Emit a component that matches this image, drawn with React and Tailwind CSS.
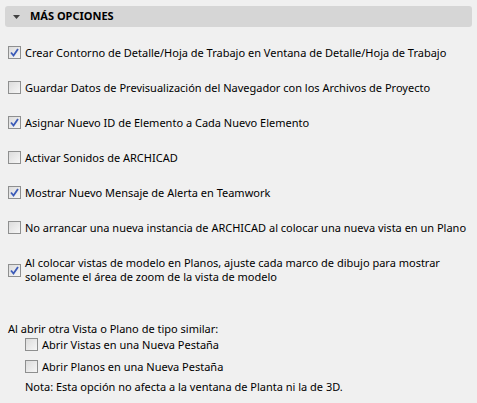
import React from 'react';

const Check = ({ checked }) => (
  <span className="relative flex h-[13px] w-[13px] shrink-0 items-center justify-center border border-[#8e8f8f] bg-gradient-to-br from-[#dcdcdc] to-[#f6f6f6]">
    {checked && (
      <svg width="9" height="9" viewBox="0 0 9 9" className="absolute">
        <path d="M1 4.5 L3.5 7.5 L8 1" fill="none" stroke="#3c5bb8" strokeWidth="1.8" />
      </svg>
    )}
  </span>
);

const Option = ({ checked, children, className = '' }) => (
  <label className={`flex items-center gap-[4px] ${className}`}>
    <Check checked={checked} />
    <span className="leading-[13px]">{children}</span>
  </label>
);

const options = [
  { checked: true, label: 'Crear Contorno de Detalle/Hoja de Trabajo en Ventana de Detalle/Hoja de Trabajo' },
  { checked: false, label: 'Guardar Datos de Previsualización del Navegador con los Archivos de Proyecto' },
  { checked: true, label: 'Asignar Nuevo ID de Elemento a Cada Nuevo Elemento' },
  { checked: false, label: 'Activar Sonidos de ARCHICAD' },
  { checked: true, label: 'Mostrar Nuevo Mensaje de Alerta en Teamwork' },
  { checked: false, label: 'No arrancar una nueva instancia de ARCHICAD al colocar una nueva vista en un Plano' },
];

export default function App() {
  return (
    <div className="h-[403px] w-[477px] overflow-hidden bg-[#f0f0f0] pt-[6px] text-[11px] text-black" style={{ fontFamily: '"Noto Sans", sans-serif' }}>
      {/* header */}
      <div className="mx-[5px] flex h-[21px] items-center rounded-[3px] bg-[#d6d6d6] pl-[8px]">
        <svg width="7" height="4" viewBox="0 0 7 4" className="mr-[10px]">
          <path d="M0 0 H7 L3.5 4 Z" fill="#404040" />
        </svg>
        <span className="text-[11px] font-bold">MÁS OPCIONES</span>
      </div>

      {/* options */}
      <div className="flex flex-col pl-[8px] pt-[19px]">
        {options.map((o, i) => (
          <Option key={i} checked={o.checked} className="h-[13px] mb-[22px]">
            {o.label}
          </Option>
        ))}
        <label className="flex items-center gap-[4px]">
          <Check checked />
          <span className="flex flex-col leading-[14px]">
            <span>Al colocar vistas de modelo en Planos, ajuste cada marco de dibujo para mostrar</span>
            <span>solamente el área de zoom de la vista de modelo</span>
          </span>
        </label>

        <p className="mt-[38px] leading-[13px]">Al abrir otra Vista o Plano de tipo similar:</p>
        <div className="mt-[3px] flex flex-col gap-[9px] pl-[17px]">
          <Option checked={false}>Abrir Vistas en una Nueva Pestaña</Option>
          <Option checked={false}>Abrir Planos en una Nueva Pestaña</Option>
        </div>
        <p className="mt-[7px] pl-[17px] leading-[13px]">Nota: Esta opción no afecta a la ventana de Planta ni la de 3D.</p>
      </div>
    </div>
  );
}
